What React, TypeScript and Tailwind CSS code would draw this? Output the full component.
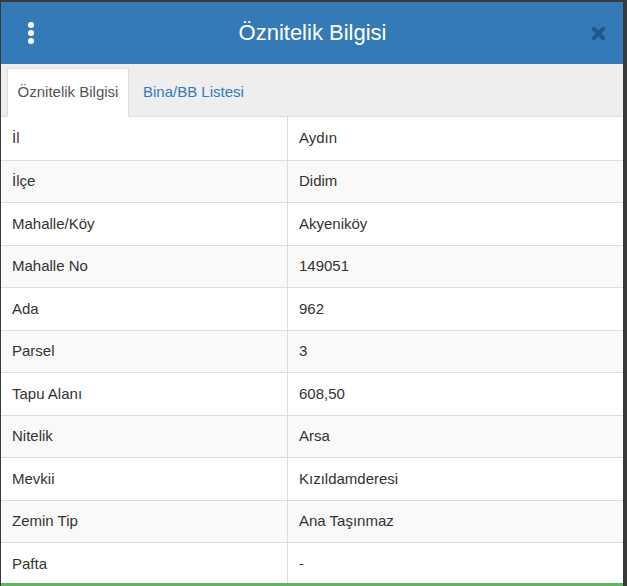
import { X } from 'lucide-react';

type Row = { label: string; value: string };

const rows: Row[] = [
  { label: 'İl', value: 'Aydın' },
  { label: 'İlçe', value: 'Didim' },
  { label: 'Mahalle/Köy', value: 'Akyeniköy' },
  { label: 'Mahalle No', value: '149051' },
  { label: 'Ada', value: '962' },
  { label: 'Parsel', value: '3' },
  { label: 'Tapu Alanı', value: '608,50' },
  { label: 'Nitelik', value: 'Arsa' },
  { label: 'Mevkii', value: 'Kızıldamderesi' },
  { label: 'Zemin Tip', value: 'Ana Taşınmaz' },
  { label: 'Pafta', value: '-' },
];

const App = () => {
  return (
    <div
      className="w-[627px] h-[586px] bg-[#3a3a3a] pt-[2px] pl-[1px] pr-[4px] overflow-hidden"
      style={{ fontFamily: '"Liberation Sans", Arial, sans-serif' }}
    >
      <div className="flex flex-col h-full bg-white">
        {/* başlık */}
        <div className="h-[62px] shrink-0 bg-[#337ab7] flex items-center justify-between pl-[25px] pr-[15px]">
          <div className="flex flex-col gap-[2px] items-center w-[10px]">
            <span className="w-[6px] h-[6px] rounded-full bg-white" />
            <span className="w-[6px] h-[6px] rounded-full bg-white" />
            <span className="w-[6px] h-[6px] rounded-full bg-white" />
          </div>
          <h1 className="text-white text-[22px] leading-none">Öznitelik Bilgisi</h1>
          <X size={19} strokeWidth={5} className="text-[#23578a]" />
        </div>

        {/* sekmeler */}
        <div className="h-[53px] shrink-0 bg-[#eeeeee] border-b border-[#dddddd] flex items-end pl-[6px]">
          <div className="h-[49px] w-[122px] -mb-px bg-white border border-[#dddddd] border-b-white flex items-center justify-center text-[15px] text-[#555555]">
            Öznitelik Bilgisi
          </div>
          <div className="h-[48px] flex items-center pl-[14px] text-[15px] text-[#337ab7]">
            Bina/BB Listesi
          </div>
        </div>

        {/* tablo */}
        <div className="flex-1 min-h-0 overflow-hidden flex flex-col">
          {rows.map((row, i) => (
            <div
              key={row.label}
              className={`flex shrink-0 h-[42.5px] text-[15px] text-[#333333] ${i > 0 ? 'border-t border-[#dddddd]' : ''} ${i % 2 === 1 ? 'bg-[#f9f9f9]' : 'bg-white'}`}
            >
              <div className="w-[287px] border-r border-[#dddddd] flex items-center pl-[11px]">{row.label}</div>
              <div className="flex-1 flex items-center pl-[11px]">{row.value}</div>
            </div>
          ))}
        </div>
        <div className="h-[3px] shrink-0 bg-[#5cb85c]" />
      </div>
    </div>
  );
};

export default App;
